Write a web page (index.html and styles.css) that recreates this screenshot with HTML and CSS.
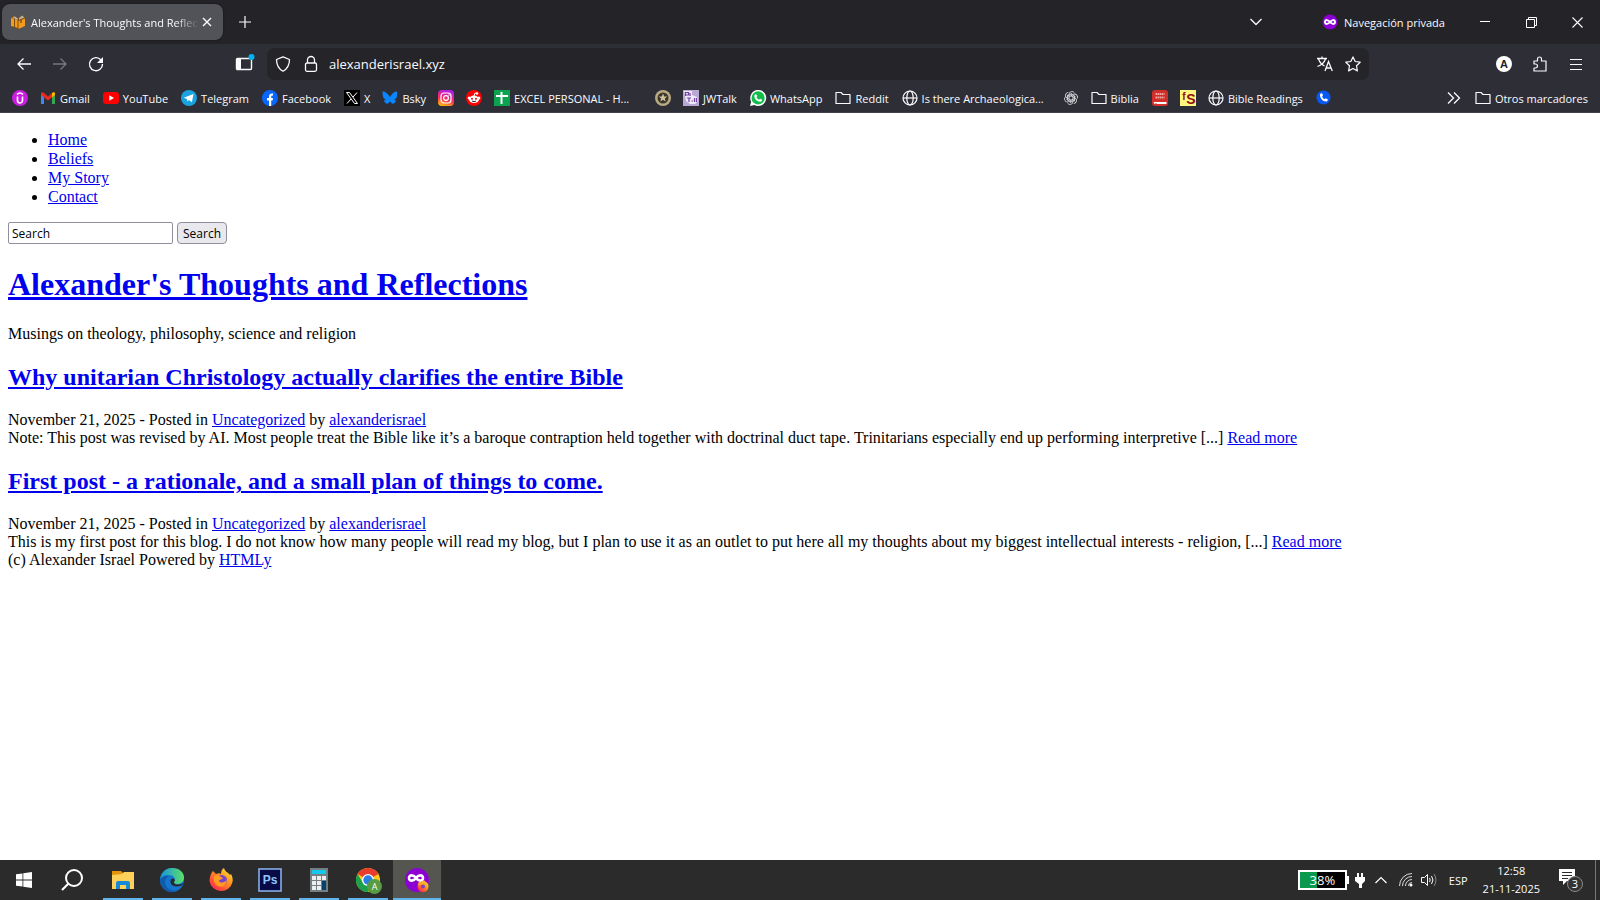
FILE: index.html
```html
<!DOCTYPE html>
<html lang="es">
<head>
  <meta charset="UTF-8">
  <meta name="viewport" content="width=device-width, initial-scale=1.0">
  <title>Alexander's Thoughts and Reflections</title>
  <link rel="stylesheet" href="styles.css">
</head>
<body>
  <!-- Tab strip -->
  <div class="tabs">
    <div class="tab">
      <svg class="icon" viewBox="0 0 16 16"><path d="M1 2.500l3.500-.5L8 4l4-3 3 2v9l-5 1.500-2 2-3-2-4-1z" fill="#7a4a12"/><path d="M1 4l3 .5v8.300L1 12zM5 5l2.500 1v8L5 13zM8.500 7L15 4.500V12l-6.500 3z" fill="#f59b1c"/><path d="M2 3l3-.5 3 2L7 6zM9 4l3-2.500 2.500 2L9 6z" fill="#b5b0a4"/><path d="M11 5.500v3.500" stroke="#4b3010"/></svg>
      <span class="tab-title">Alexander's Thoughts and Reflections</span>
      <button class="tab-close" aria-label="Cerrar"><svg width="10" height="10" viewBox="0 0 10 10"><path d="M1 1l8 8M9 1l-8 8" stroke="#fbfbfe" stroke-width="1.4"/></svg></button>
    </div>
    <button class="new-tab" aria-label="Nueva"><svg width="12" height="12" viewBox="0 0 12 12"><path d="M6 0v12M0 6h12" stroke="#fbfbfe" stroke-width="1.2"/></svg></button>
    <button class="all-tabs" aria-label="Lista"><svg width="12" height="8" viewBox="0 0 12 8"><path d="M.5 1L6 6.500 11.500 1" fill="none" stroke="#fbfbfe" stroke-width="1.3"/></svg></button>
    <div class="private">
      <svg class="icon" viewBox="0 0 16 16"><circle cx="8" cy="8" r="7.500" fill="#8d00d4"/><path d="M8 8C6.500 6 3 5 3 8s3.500 2 5 0 5-3 5 0-3.500 2-5 0z" fill="none" stroke="#fff" stroke-width="2"/></svg>
      <span>Navegación privada</span>
    </div>
    <button class="win" aria-label="Minimizar"><svg width="10" height="10" viewBox="0 0 10 10"><path d="M0 4.500h10" stroke="#fff"/></svg></button>
    <button class="win" aria-label="Restaurar"><svg width="11" height="11" viewBox="0 0 11 11"><path d="M.5 2.500h8v8h-8zM2.500 2.500v-2h8v8h-2" fill="none" stroke="#fff"/></svg></button>
    <button class="win" aria-label="Cerrar ventana"><svg width="11" height="11" viewBox="0 0 11 11"><path d="M.5.5l10 10M10.500.5l-10 10" stroke="#fff" stroke-width="1.1"/></svg></button>
  </div>

  <!-- Navigation toolbar -->
  <div class="toolbar">
    <button class="tool" aria-label="Atrás"><svg class="icon" viewBox="0 0 16 16"><path d="M15 8H2M7.500 2.500L2 8l5.500 5.500" fill="none" stroke="#fbfbfe" stroke-width="1.3"/></svg></button>
    <button class="tool" aria-label="Adelante"><svg class="icon" viewBox="0 0 16 16"><path d="M1 8h13M8.500 2.500L14 8l-5.500 5.500" fill="none" stroke="#77777d" stroke-width="1.3"/></svg></button>
    <button class="tool" aria-label="Recargar"><svg class="icon" viewBox="0 0 16 16"><path d="M13 4a6.500 6.500 0 1 0 1.500 4" fill="none" stroke="#fbfbfe" stroke-width="1.4"/><path d="M15 1v6H9z" fill="#fbfbfe"/></svg></button>
    <div class="spring"></div>
    <button class="tool" aria-label="Barra lateral"><svg width="20" height="20" viewBox="0 0 20 20"><rect x="2.500" y="4.500" width="15" height="11" rx="1" fill="none" stroke="#fbfbfe" stroke-width="1.4"/><path d="M3 4h4v12H3z" fill="#fbfbfe"/><circle cx="17.500" cy="3" r="3" fill="#00b3f4"/></svg></button>
    <div class="urlbar">
      <svg class="icon" viewBox="0 0 16 16"><path d="M8 .8l6.500 2.700c0 5-1.500 9-6.500 11.800C3 12.500 1.500 8.500 1.500 3.500z" fill="none" stroke="#fbfbfe" stroke-width="1.3" stroke-linejoin="round"/></svg>
      <svg class="icon" viewBox="0 0 16 16"><path d="M4.500 7V4a3.500 3.500 0 0 1 7 0v3" fill="none" stroke="#fbfbfe" stroke-width="1.3"/><rect x="2.500" y="7" width="11" height="8.300" rx="1.500" fill="none" stroke="#fbfbfe" stroke-width="1.3"/></svg>
      <input class="address" type="text" aria-label="Dirección" value="alexanderisrael.xyz">
      <svg class="icon" viewBox="0 0 16 16"><path d="M0 2.500h10M5 .5v2M1.500 3c1.500 4 4 6 6 7M8.500 3C7 7 3.500 9.500.5 10.500M8 15l3.500-9.500L15.300 15M9.300 12h4.700" fill="none" stroke="#fbfbfe" stroke-width="1.3"/></svg>
      <svg class="icon" viewBox="0 0 16 16"><path d="M8 .9l2.200 4.600 5 .7-3.700 3.500.9 5.200L8 12.500l-4.400 2.400.9-5.200L.8 6.200l5-.7z" fill="none" stroke="#fbfbfe" stroke-width="1.2" stroke-linejoin="round"/></svg>
    </div>
    <div class="spring"></div>
    <button class="tool" aria-label="Cuenta"><svg class="icon" viewBox="0 0 16 16"><circle cx="8" cy="8" r="8" fill="#fff"/><text x="8" y="12" class="svg-text" font-size="11" fill="#222">A</text></svg></button>
    <button class="tool" aria-label="Extensiones"><svg class="icon" viewBox="0 0 16 16"><path d="M2 8V5h3.500V3a2 2 0 0 1 4 0v2H14v10H2v-3h1.500a2 2 0 0 0 0-4z" fill="none" stroke="#fbfbfe" stroke-width="1.2" stroke-linejoin="round"/></svg></button>
    <button class="tool" aria-label="Menú"><svg class="icon" viewBox="0 0 16 16"><path d="M2 3.500h12M2 8.500h12M2 13.500h12" stroke="#fbfbfe" stroke-width="1"/></svg></button>
  </div>

  <!-- Bookmarks -->
  <nav class="bookmarks">
    <a href="#" aria-label="Umbrel"><svg class="icon" viewBox="0 0 16 16"><circle cx="8" cy="8" r="8" fill="#c91ee0"/><path d="M5.500 6.500v4a2.500 2.500 0 0 0 5 0v-4M5 4.500q3-3 6 0" fill="none" stroke="#fff" stroke-width="1.600"/></svg></a>
    <a href="#" class="named"><svg class="icon" viewBox="0 0 16 16"><path d="M1 3v11h3V6z" fill="#4285f4"/><path d="M15 3v11h-3V6z" fill="#34a853"/><path d="M1 3q1-1.500 3 0l4 3.500L12 3q2-1.500 3 0v2l-7 5.500L1 5z" fill="#ea2b20"/><path d="M12 3q2-1.500 3 0v2l-3 2.500z" fill="#fbbc04"/></svg>Gmail</a>
    <a href="#" class="named"><svg class="icon" viewBox="0 0 16 16"><rect y="2" width="16" height="12" rx="3" fill="#f00"/><path d="M6.300 5.300v5.400L11 8z" fill="#fff"/></svg>YouTube</a>
    <a href="#" class="named"><svg class="icon" viewBox="0 0 16 16"><circle cx="8" cy="8" r="8" fill="#1ba3df"/><path d="M2.800 7.800L12.500 4l-1.600 8.300-3-2.200-1.500 1.500-.4-2.700z" fill="#fff"/></svg>Telegram</a>
    <a href="#" class="named"><svg class="icon" viewBox="0 0 16 16"><circle cx="8" cy="8" r="8" fill="#0866ff"/><path d="M7 16v-5.500H5V8h2V6.500q0-3.500 4-3v2.100q-1.800-.2-1.800 1V8H11l-.4 2.500H9.200V16z" fill="#fff"/></svg>Facebook</a>
    <a href="#"><svg class="icon" viewBox="0 0 16 16"><path d="M0 0h16v16H0z" fill="#000"/><path d="M2.500 2.500h3l8 11h-3zM13 2.500L9 7M7 9l-4 4.500" fill="none" stroke="#fff"/></svg>X</a>
    <a href="#"><svg class="icon" viewBox="0 0 16 16"><path d="M8 7C6.500 4 3 1.500 1.500 1.500S.5 3 1 6.500C1.300 8.500 2.500 9 4.500 9c-2.500.5-3 2-1.500 3.500 2.500 2.500 4 .5 5-1.500 1 2 2.500 4 5 1.500 1.500-1.500 1-3-1.500-3.500 2 0 3.200-.5 3.500-2.500.5-3.500.5-5-1-5S9.500 4 8 7z" fill="#0a85ff"/></svg>Bsky</a>
    <a href="#" aria-label="Instagram"><svg class="icon" viewBox="0 0 16 16"><defs><linearGradient id="insta" x1=".2" y1="1" x2=".5" y2="0"><stop offset="0" stop-color="#ffc700"/><stop offset=".45" stop-color="#ff2b60"/><stop offset="1" stop-color="#b31be8"/></linearGradient></defs><rect width="16" height="16" rx="4" fill="url(#insta)"/><rect x="3" y="3" width="10" height="10" rx="3" fill="none" stroke="#fff" stroke-width="1.200"/><circle cx="8" cy="8" r="2.400" fill="none" stroke="#fff" stroke-width="1.200"/><circle cx="11" cy="5" r=".7" fill="#fff"/></svg></a>
    <a href="#" aria-label="Reddit"><svg class="icon" viewBox="0 0 16 16"><circle cx="8" cy="8" r="8" fill="#f00"/><circle cx="3.200" cy="8" r="1.500" fill="#fff"/><circle cx="12.800" cy="8" r="1.500" fill="#fff"/><ellipse cx="8" cy="9.300" rx="5" ry="3.700" fill="#fff"/><circle cx="11" cy="3.500" r="1.200" fill="#fff"/><path d="M8 6l1-3 2 .5" fill="none" stroke="#fff"/><circle cx="6" cy="8.800" r="1" fill="#d11"/><circle cx="10" cy="8.800" r="1" fill="#d11"/><path d="M6 11q2 1.300 4 0" fill="none" stroke="#222"/></svg></a>
    <a href="#"><svg class="icon" viewBox="0 0 16 16"><path d="M0 0h16v16H0z" fill="#0ba34e"/><path d="M2 6h12M7.500 2v12" stroke="#fff" stroke-width="2"/></svg><span class="long">EXCEL PERSONAL - H...</span></a>
    <a href="#" aria-label="Estrella"><svg class="icon" viewBox="0 0 16 16"><circle cx="8" cy="8" r="8" fill="#bba982"/><circle cx="8" cy="8" r="5.500" fill="#39362e"/><path d="M8 3.500l1.200 3h3L9.800 8.400l.9 3.100L8 9.700l-2.700 1.800.9-3.100-2.400-1.900h3z" fill="#d4c398"/></svg></a>
    <a href="#" class="named"><svg class="icon" viewBox="0 0 16 16"><path d="M0 0h16v16H0z" fill="#b9a7d5"/><path d="M1 1h8v4l5 2 1 4-3 3H7l-4-3z" fill="#eee8f8"/><path d="M2.500 6V2.500h3V5h-3M7 3v3M4 8h4M6 8v4M8.500 11h1.500M11.500 8v4M13.500 8v4" fill="none" stroke="#71429e" stroke-width="1.200"/></svg>JWTalk</a>
    <a href="#" class="named"><svg class="icon" viewBox="0 0 16 16"><path d="M0 16l1.200-4.200A8 8 0 1 1 4.400 15z" fill="#fff"/><circle cx="8.100" cy="7.900" r="6.600" fill="#12bd4c"/><path d="M5.300 4.200l1.200.2.700 1.800-.8 1q1 1.900 2.700 2.500l1-1 2 1q-.2 2.300-2.300 2-5-.8-5.500-5.500.1-1.500 1-2z" fill="#fff"/></svg>WhatsApp</a>
    <a href="#" class="named"><svg class="icon" viewBox="0 0 16 16"><path d="M1 13.500v-11h5l2 2h7v9z" fill="none" stroke="#fbfbfe" stroke-width="1.200" stroke-linejoin="round"/></svg>Reddit</a>
    <a href="#"><svg class="icon" viewBox="0 0 16 16"><g fill="none" stroke="#fbfbfe" stroke-width="1.200"><circle cx="8" cy="8" r="7"/><ellipse cx="8" cy="8" rx="3.200" ry="7"/><path d="M1 8h14"/></g></svg><span class="long">Is there Archaeologica...</span></a>
    <a href="#" aria-label="ChatGPT"><svg class="icon" viewBox="0 0 16 16"><g fill="none" stroke="#d8d8dc" stroke-width=".9"><path id="petal" d="M6 9.500V4.200a3 3 0 0 1 5.500-1.300M8 4l4.500 2.600"/><use href="#petal" transform="rotate(60 8 8)"/><use href="#petal" transform="rotate(120 8 8)"/><use href="#petal" transform="rotate(180 8 8)"/><use href="#petal" transform="rotate(240 8 8)"/><use href="#petal" transform="rotate(300 8 8)"/></g></svg></a>
    <a href="#" class="named"><svg class="icon" viewBox="0 0 16 16"><path d="M1 13.500v-11h5l2 2h7v9z" fill="none" stroke="#fbfbfe" stroke-width="1.200" stroke-linejoin="round"/></svg>Biblia</a>
    <a href="#" aria-label="Holy Bible"><svg class="icon" viewBox="0 0 16 16"><rect width="16" height="16" rx="3" fill="#d12e2c"/><path d="M3.500 4h9M3.500 7.500h9" stroke="#f0a49d" stroke-width="2" stroke-dasharray="1.500 .5"/><path d="M1.500 12h13v2h-12z" fill="#fff"/><path d="M4 13v2" stroke="#d12e2c"/></svg></a>
    <a href="#" aria-label="FS"><svg class="icon" viewBox="0 0 16 16"><path d="M0 0h16v16H0z" fill="#fff780"/><text x="4" y="10" class="svg-text" font-size="10" fill="#8e1010">f</text><text x="11" y="14" class="svg-text" font-size="14" fill="#8e1010">S</text></svg></a>
    <a href="#" class="named"><svg class="icon" viewBox="0 0 16 16"><g fill="none" stroke="#fbfbfe" stroke-width="1.200"><circle cx="8" cy="8" r="7"/><ellipse cx="8" cy="8" rx="3.200" ry="7"/><path d="M1 8h14"/></g></svg>Bible Readings</a>
    <a href="#" aria-label="Teléfono"><svg class="icon" viewBox="0 0 16 16"><circle cx="7.500" cy="7.500" r="7" fill="#0758f5"/><path d="M4 4l2-1 1 2.500-1 1q1 2 2.500 2.700l1-1L12 9.500l-1 2C7 12 3.500 8 4 4z" fill="#fff"/></svg></a>
    <div class="bookmarks-end">
      <button class="more" aria-label="Más"><svg width="14" height="12" viewBox="0 0 14 12"><path d="M1 .5L6.500 6 1 11.500M7 .5L12.500 6 7 11.500" fill="none" stroke="#fbfbfe" stroke-width="1.300"/></svg></button>
      <a href="#"><svg class="icon" viewBox="0 0 16 16"><path d="M1 13.500v-11h5l2 2h7v9z" fill="none" stroke="#fbfbfe" stroke-width="1.200" stroke-linejoin="round"/></svg>Otros marcadores</a>
    </div>
  </nav>

  <!-- Blog -->
  <main class="page">
    <ul class="menu">
      <li><a href="#">Home</a></li>
      <li><a href="#">Beliefs</a></li>
      <li><a href="#">My Story</a></li>
      <li><a href="#">Contact</a></li>
    </ul>
    <form class="search">
      <input type="text" name="search" aria-label="Search" value="Search">
      <button type="submit">Search</button>
    </form>
    <h1><a href="#">Alexander's Thoughts and Reflections</a></h1>
    <p>Musings on theology, philosophy, science and religion</p>

    <article>
      <h2><a href="#">Why unitarian Christology actually clarifies the entire Bible</a></h2>
      <div>November 21, 2025 - Posted in <a href="#">Uncategorized</a> by <a href="#">alexanderisrael</a></div>
      <div>Note: This post was revised by AI. Most people treat the Bible like it’s a baroque contraption held together with doctrinal duct tape. Trinitarians especially end up performing interpretive [...] <a href="#">Read more</a></div>
    </article>
    <article>
      <h2><a href="#">First post - a rationale, and a small plan of things to come.</a></h2>
      <div>November 21, 2025 - Posted in <a href="#">Uncategorized</a> by <a href="#">alexanderisrael</a></div>
      <div>This is my first post for this blog. I do not know how many people will read my blog, but I plan to use it as an outlet to put here all my thoughts about my biggest intellectual interests - religion, [...] <a href="#">Read more</a></div>
    </article>
    <footer>(c) Alexander Israel Powered by <a href="#">HTMLy</a></footer>
  </main>

  <!-- Windows taskbar -->
  <div class="taskbar">
    <button class="start" aria-label="Inicio"><svg width="16" height="16" viewBox="0 0 16 16"><path d="M0 2.300L6.500 1.400v6.200H0zM7.300 1.200L16 0v7.600H7.300zM0 8.400h6.500v6.200L0 13.700zM7.300 8.400H16V16l-8.700-1.200z" fill="#fff"/></svg></button>
    <button class="start" aria-label="Buscar"><svg width="22" height="22" viewBox="0 0 22 22"><circle cx="13" cy="9" r="8" fill="none" stroke="#fff" stroke-width="2"/><path d="M7.500 14.500L1 21" stroke="#fff" stroke-width="2.200"/></svg></button>
    <div class="apps">
      <button class="app" aria-label="Explorador"><svg width="24" height="24" viewBox="0 0 24 24"><path d="M1 3h9l2 2v4H1z" fill="#e8930c"/><path d="M1 7l10-1 2-2h10v17H1z" fill="#ffd05a"/><path d="M5 21v-6q0-2 2-2h10q2 0 2 2v6h-4v-4H9v4z" fill="#168bd5"/></svg></button>
      <button class="app" aria-label="Edge"><svg width="24" height="24" viewBox="0 0 24 24"><defs><linearGradient id="edge" x1="0" x2="1"><stop offset="0" stop-color="#1793dc"/><stop offset="1" stop-color="#5ce06a"/></linearGradient></defs><circle cx="12" cy="12" r="12" fill="#1476ce"/><path d="M0 12C1 4 6 0 12 0c8 0 12 5 12 9.500 0 4-3 6.500-7 6.500-3 0-4-1.500-2.500-3C16 10 13 7 9 7c-4 0-8 2-9 5z" fill="url(#edge)"/><path d="M14.500 13c-1.500 1.500 0 3.500 3 3.500 2 0 4-.3 6-1.500-.8 2.500-3.300 3.500-6.500 3.500-4.800 0-7-3-6.500-6 .6-2 2.500-2.500 3.500-1.500 1 .6 1.300 1.200.5 2z" fill="#292a29"/><path d="M9 8C5 9 3 17 9 21c3 2 7 1.500 10 .5C15 25 9 25 5 22 1 19 0 15 0 12c1-3 5-5 9-4z" fill="#125bab"/></svg></button>
      <button class="app" aria-label="Firefox"><svg width="24" height="24" viewBox="0 0 24 24"><defs><linearGradient id="fox" x1="1" y1="0" x2=".2" y2="1"><stop offset="0" stop-color="#fff13d"/><stop offset=".45" stop-color="#ff9420"/><stop offset="1" stop-color="#ff214e"/></linearGradient></defs><path d="M4 3l3 3c2-1 4-1 5 0 0-3 1-5 3-6 1 4 4 4 6 7l1-1c1.500 3 2 5 1.500 8A11.700 11.700 0 0 1 .5 13C.5 9 2 5 4 3z" fill="url(#fox)"/><circle cx="12.500" cy="12.500" r="5.500" fill="#7544cf"/><path d="M5 9c2-2 5-2 7 0l2 1c-1 2-4 1-4 3 2 3 6 1 8-1-1 6-5 8-9 6-3-1-5-5-4-9z" fill="#ff9a23"/></svg></button>
      <button class="app" aria-label="Photoshop"><svg width="24" height="24" viewBox="0 0 24 24"><path d="M1 1h22v22H1z" fill="#080b45" stroke="#8cb8f4" stroke-width="1.500"/><text x="12" y="16" class="svg-text" font-size="12" fill="#8cc8ff">Ps</text></svg></button>
      <button class="app" aria-label="Calculadora"><svg width="20" height="24" viewBox="0 0 20 24"><path d="M1 0h18v24H1z" fill="#737f85"/><path d="M3 2h14v4H3z" fill="#13c8e8"/><g fill="#eee"><path d="M3 8h4v4H3zM8 8h4v4H8zM13 8h4v4h-4zM3 13h4v4H3zM8 13h4v4H8zM3 18h4v4H3zM8 18h4v4H8z"/></g><path d="M13 13h4v9h-4z" fill="#07426d"/></svg></button>
      <button class="app" aria-label="Chrome"><svg width="24" height="24" viewBox="0 0 24 24"><circle cx="12" cy="12" r="12" fill="#fcc91f"/><path d="M12 12L1.600 6A12 12 0 0 1 22.400 6z" fill="#ea3c2d"/><path d="M1.600 6A12 12 0 0 0 12 24l5-9-5 2-5-2z" fill="#1ba04b"/><circle cx="12" cy="12" r="6" fill="#fff"/><circle cx="12" cy="12" r="4.700" fill="#287fe8"/><circle cx="18.500" cy="18.500" r="7.500" fill="#579b43"/><text x="18.500" y="22" class="svg-text regular" font-size="9" fill="#fff">A</text></svg></button>
      <button class="app active" aria-label="Firefox privado"><svg width="24" height="24" viewBox="0 0 24 24"><circle cx="12" cy="12" r="12" fill="#8d00d4"/><path d="M11 10C9 7 4 6 4 10s5 3 7 0 7-4 7 0-5 3-7 0z" fill="none" stroke="#fff" stroke-width="2.600"/><circle cx="18" cy="18.500" r="5.500" fill="url(#fox)"/><path d="M13 17l1-4 2 2 3-3 3 4z" fill="#ffae2b"/><circle cx="18" cy="18.500" r="2" fill="#7544cf"/></svg></button>
    </div>

    <div class="tray">
      <div class="battery"><span style="width: 38%"></span><b>38%</b></div>
      <svg class="plug" width="10" height="16" viewBox="0 0 10 16"><path d="M2 1h2v4h2V1h2v4h2v4L7 12v4H4v-4L0 9V5h2z" fill="#fff"/></svg>
      <svg width="12" height="8" viewBox="0 0 12 8"><path d="M.5 7L6 1.500 11.500 7" fill="none" stroke="#fff" stroke-width="1.200"/></svg>
      <svg width="14" height="14" viewBox="0 0 14 14"><g fill="none" stroke="#ddd"><path d="M.5 13A12.500 12.500 0 0 1 13 .5M3.500 13A9.500 9.500 0 0 1 13 3.500M6.500 13A6.500 6.500 0 0 1 13 6.500M9.500 13A3.500 3.500 0 0 1 13 9.500"/></g><circle cx="12" cy="12" r="1.500" fill="#fff"/></svg>
      <svg class="volume" width="16" height="14" viewBox="0 0 16 14"><path d="M.5 4.500h3l3-3v11l-3-3h-3z" fill="none" stroke="#fff"/><path d="M8.500 5q1.500 2 0 4M10.500 3q3 4 0 8" fill="none" stroke="#fff"/><path d="M13 1q4 6 0 12" fill="none" stroke="#888"/></svg>
      <span class="lang">ESP</span>
      <div class="clock"><span>12:58</span><span>21-11-2025</span></div>
      <button class="notices" aria-label="Notificaciones">
        <svg width="26" height="24" viewBox="0 0 26 24"><path d="M1 1h16v12H9l-4 4v-4H1z" fill="#fff"/><path d="M4 4.500h10M4 7.500h10M4 10.500h6" stroke="#2a2b2a"/><circle cx="17" cy="16" r="7.500" fill="#333" stroke="#8b8b8b"/><text x="17" y="20" class="svg-text regular" font-size="11" fill="#fff">3</text></svg>
      </button>
    </div>
  </div>
</body>
</html>
```
FILE: styles.css
```css
* {
  box-sizing: border-box;
}

body {
  margin: 0;
  height: 100vh;
  display: flex;
  flex-direction: column;
  font-family: "Open Sans", "Noto Sans", sans-serif;
  font-size: 11px;
  color: #fbfbfe;
  background: #fff;
}

button {
  padding: 0;
  border: none;
  background: none;
  color: inherit;
  font-family: inherit;
}

svg {
  display: block;
  flex: none;
  overflow: visible;
}

.icon {
  width: 16px;
  height: 16px;
}

.svg-text {
  font-family: "Liberation Sans", sans-serif;
  font-weight: bold;
  text-anchor: middle;
}

.svg-text.regular {
  font-family: "Open Sans", sans-serif;
  font-weight: normal;
}

/* Tab strip */
.tabs {
  display: flex;
  align-items: center;
  height: 44px;
  flex: none;
  background: #242428;
}

.tab {
  display: flex;
  align-items: center;
  width: 221px;
  height: 36px;
  margin-left: 2px;
  padding: 0 8px;
  border-radius: 8px;
  background: #525358;
  box-shadow: 0 0 2px rgba(0, 0, 0, 0.6);
}

.tab-title {
  flex: 1;
  margin-left: 5px;
  overflow: hidden;
  white-space: nowrap;
  mask-image: linear-gradient(to left, transparent, #000 24px);
}

.tab-close {
  display: flex;
  justify-content: center;
  width: 16px;
}

.new-tab {
  margin-left: 16px;
}

.all-tabs {
  margin-left: auto;
}

.private {
  display: flex;
  align-items: center;
  gap: 6px;
  width: 128px;
  margin: 0 12px 0 60px;
  white-space: nowrap;
}

.win {
  display: flex;
  align-items: center;
  justify-content: center;
  width: 46px;
  height: 44px;
}

/* Navigation toolbar */
.toolbar {
  display: flex;
  align-items: center;
  height: 40px;
  flex: none;
  padding: 0 6px;
  background: #2e2e37;
}

.tool {
  display: flex;
  align-items: center;
  justify-content: center;
  width: 36px;
  height: 32px;
}

.spring {
  flex: 0 1 112px;
}

.urlbar {
  display: flex;
  align-items: center;
  flex: 1;
  gap: 12px;
  height: 32px;
  margin: 0 5px;
  padding: 0 8px;
  border-radius: 8px;
  background: #242429;
}

.address {
  flex: 1;
  padding: 0;
  margin-left: -2px;
  border: none;
  outline: none;
  background: none;
  color: inherit;
  font-family: inherit;
  font-size: 13px;
}

/* Bookmarks */
.bookmarks {
  display: flex;
  align-items: center;
  gap: 12px;
  height: 29px;
  flex: none;
  padding: 0 12px;
  border-bottom: 1px solid #42424a;
  background: #2e2e37;
  white-space: nowrap;
}

.bookmarks a {
  display: flex;
  align-items: center;
  gap: 4px;
  color: inherit;
  text-decoration: none;
}

.bookmarks .named {
  padding-right: 1px;
}

.long {
  width: 129px;
}

.bookmarks-end {
  display: flex;
  align-items: center;
  gap: 14px;
  margin-left: auto;
}

/* Blog */
.page {
  flex: 1;
  overflow: auto;
  padding: 0 8px;
  background: #fff;
  color: #000;
  font-family: "Liberation Serif", "Times New Roman", serif;
  font-size: 16px;
  line-height: 18px;
}

.page a {
  color: #0000ee;
}

.menu {
  margin: 17px 0 16px;
  padding-left: 40px;
  line-height: 19px;
}

.search {
  display: flex;
  gap: 4px;
}

.search input,
.search button {
  height: 22px;
  border: 1px solid #8f8f9d;
  color: #000;
  font-family: "Open Sans", "Noto Sans", sans-serif;
  font-size: 12px;
}

.search input {
  width: 165px;
  padding: 0 3px;
  border-radius: 2px;
}

.search button {
  padding: 0 5px;
  border-radius: 4px;
  background: #e9e9ed;
}

h1 {
  margin: 22px 0;
  font-size: 32px;
  line-height: 37px;
}

h2 {
  margin: 20px 0;
  font-size: 24px;
  line-height: 28px;
}

.page p {
  margin: 16px 0;
}

/* Windows taskbar */
.taskbar {
  display: flex;
  height: 40px;
  flex: none;
  background: #2a2b2a;
}

.start,
.app {
  display: flex;
  align-items: center;
  justify-content: center;
  width: 48px;
  height: 40px;
}

.apps {
  display: flex;
  gap: 1px;
  margin-left: 3px;
}

.app {
  background: linear-gradient(#5db5ec, #5db5ec) center bottom / 40px 2px no-repeat;
}

.app.active {
  background-color: #555650;
  background-size: 48px 2px;
}

.tray {
  display: flex;
  align-items: center;
  gap: 12px;
  margin-left: auto;
  margin-right: 4px;
  padding-right: 11px;
  border-right: 1px solid #777;
}

.battery {
  position: relative;
  width: 49px;
  height: 20px;
  border: 2px solid #fff;
  background: #000;
  font-size: 13px;
  line-height: 16px;
  text-align: center;
}

.battery::after {
  content: "";
  position: absolute;
  top: 4px;
  right: -4px;
  width: 2px;
  height: 8px;
  background: #fff;
}

.battery span {
  position: absolute;
  top: 0;
  left: 0;
  height: 100%;
  background: #0b9a4d;
}

.battery b {
  position: relative;
  font-weight: normal;
}

.plug {
  margin: 0 -2px 0 -4px;
}

.volume {
  margin-left: -4px;
}

.clock {
  display: flex;
  flex-direction: column;
  align-items: center;
  margin-left: 3px;
  line-height: 18px;
}

.notices {
  margin-left: 6px;
}
```
